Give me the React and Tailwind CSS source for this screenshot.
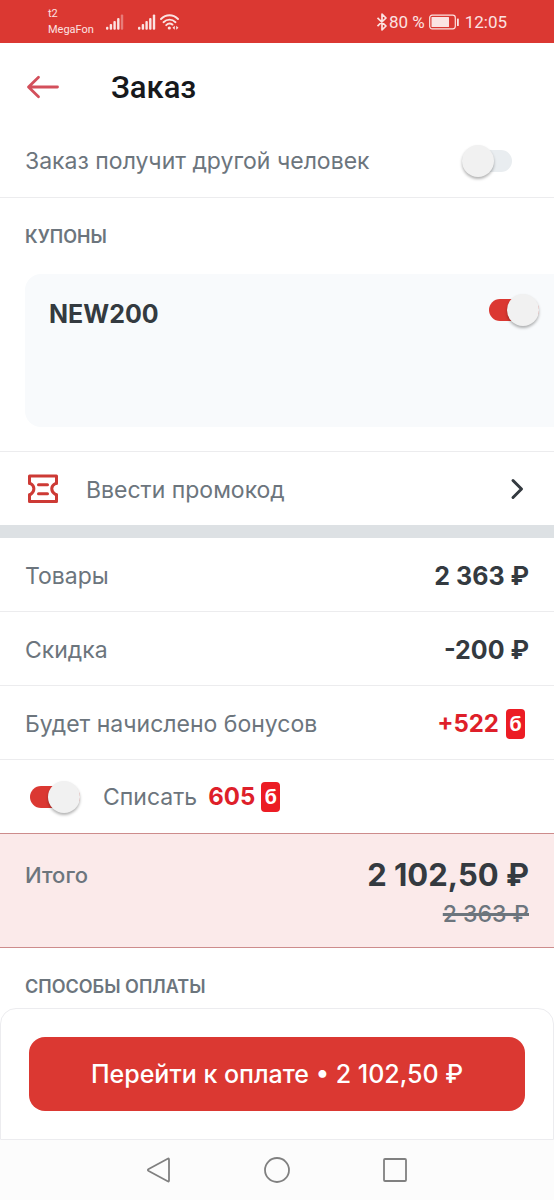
import { useState } from "react";

const rowStyle = "flex items-center justify-between h-[74px] px-[25px] pt-0.5 border-b border-[#ececee]";
const labelStyle = "text-[23px] leading-8 text-[#6c757d]";
const priceStyle = "text-[25px] leading-8 font-bold text-[#343a40]";
const headingStyle = "text-[18px] leading-7 font-semibold text-[#6c757d]";

/**
 * Material-like switch built on a native checkbox.
 * The track is drawn by ::before, the knob by ::after.
 */
const Switch = ({ id, checked, onChange }) => (
    <input
        id={id}
        type="checkbox"
        checked={checked}
        onChange={(e) => onChange(e.target.checked)}
        className="relative shrink-0 appearance-none w-[50px] h-8 cursor-pointer before:absolute before:inset-x-0 before:top-[5px] before:h-[22px] before:rounded-full before:bg-[#e9edf0] checked:before:bg-[#db3832] after:absolute after:left-0 after:top-0 after:size-8 after:rounded-full after:bg-[#f1f1f1] after:shadow-[0_2px_3px_rgba(0,0,0,0.3)] checked:after:left-[18px]"
    />
);

const BonusBadge = () => (
    <span className="inline-flex items-center justify-center w-[19px] h-[30px] rounded bg-[#ec1c24] text-white text-[20px] leading-7 font-bold">б</span>
);

/* Mobile signal, the last bar may be dimmed */
const Signal = ({ dim }) => (
    <svg className="w-[18px] h-4" viewBox="0 0 18 16" fill="#fbe3e2">
        <rect x="0" y="12.800" width="2.400" height="3" rx="1" />
        <rect x="3.700" y="10" width="2.400" height="5.800" rx="1" />
        <rect x="7.400" y="7" width="2.400" height="8.800" rx="1" />
        <rect x="11.100" y="4" width="2.400" height="11.800" rx="1" />
        <rect x="14.800" y="0.500" width="2.400" height="15.300" rx="1" opacity={dim ? 0.4 : 1} />
    </svg>
);

const StatusBar = () => (
    <div className="flex items-center justify-between h-[43px] pl-12 pr-[47px] bg-[#db3832] text-[#fbe3e2] font-['Roboto',sans-serif]">
        <div className="flex items-center">
            <div className="w-[58px] text-[11px] leading-4">
                <p>t2</p>
                <p>MegaFon</p>
            </div>
            <Signal dim />
            <span className="w-[14px]" />
            <Signal />
            <svg className="w-5 h-4 ml-1" viewBox="0 0 20 16" fill="none" stroke="#fbe3e2" strokeWidth="1.900" strokeLinecap="round">
                <path d="M1 5C6 0 13 0 18 5" />
                <path d="M3.500 8.200C7 4.800 12 4.800 15.500 8.200" />
                <path d="M6.200 11.200C8 9.400 10.500 9.200 12.500 10.600" />
                <circle cx="9.300" cy="14" r="1.600" fill="#fbe3e2" stroke="none" />
                <path d="M14.800 11.800L12.500 13.800L14.800 15.800ZM16.200 11.800L18.500 13.800L16.200 15.800Z" fill="#fbe3e2" stroke="none" />
            </svg>
        </div>
        <div className="flex items-center text-[17px] leading-6">
            <svg className="w-3 h-[18px]" viewBox="0 0 12 18" fill="none" stroke="#fbe3e2" strokeWidth="1.700" strokeLinejoin="round">
                <path d="M1.500 4.800L10 13L6 16.800V1.200L10 5L1.500 13.200" />
            </svg>
            <span className="ml-px">80 %</span>
            <svg className="w-[30px] h-4 ml-1 mr-1.5" viewBox="0 0 30 16">
                <rect x="0.700" y="1.200" width="25.600" height="13.600" rx="2.500" fill="none" stroke="#fbe3e2" strokeWidth="1.200" />
                <rect x="2.500" y="3" width="17.500" height="10" rx="0.500" fill="#fbe3e2" />
                <rect x="28" y="4.500" width="1.800" height="7.500" rx="0.600" fill="#fbe3e2" />
            </svg>
            <span>12:05</span>
        </div>
    </div>
);

const App = () => {
    const [otherPerson, setOtherPerson] = useState(false);
    const [coupon, setCoupon] = useState(true);
    const [spendBonus, setSpendBonus] = useState(true);

    return (
        <div className="flex flex-col min-h-screen bg-white font-['Inter',sans-serif]">
            <StatusBar />

            <header className="flex items-center h-[81px] px-[25px] pt-[7px]">
                <button type="button" aria-label="Назад" className="cursor-pointer">
                    <svg className="w-9 h-6" viewBox="0 0 36 24" fill="none" stroke="#d34f5b" strokeWidth="2.800" strokeLinecap="round" strokeLinejoin="round">
                        <path d="M32.500 12H4M13.500 2.200L3.500 12L13.500 21.800" />
                    </svg>
                </button>
                <h1 className="ml-[50px] pt-0.5 text-[31px] leading-9 font-medium text-[#17191c] font-['Roboto',sans-serif]">Заказ</h1>
            </header>

            <main className="flex-1">
                <div className="flex items-center justify-between h-[74px] pl-[25px] pr-[42px] border-b border-[#ececee]">
                    <label htmlFor="other-person" className={labelStyle}>Заказ получит другой человек</label>
                    <Switch id="other-person" checked={otherPerson} onChange={setOtherPerson} />
                </div>

                {/* Coupons: the card runs off the right edge */}
                <section className="pl-[25px] pt-[25px] pb-6 border-b border-[#ececee]">
                    <h2 className={headingStyle}>КУПОНЫ</h2>
                    <div className="flex items-start justify-between h-[153px] mt-[23px] pl-6 pr-[15px] pt-5 rounded-l-2xl bg-[#f8fafc]">
                        <label htmlFor="coupon" className="text-[25px] leading-10 font-bold text-[#343a40]">NEW200</label>
                        <Switch id="coupon" checked={coupon} onChange={setCoupon} />
                    </div>
                </section>

                <button type="button" className="flex items-center w-full h-[73px] pl-[25px] pr-7 cursor-pointer">
                    <svg className="w-9 h-8" viewBox="0 0 36 32" fill="none" stroke="#cd3a35" strokeWidth="3" strokeLinecap="round" strokeLinejoin="round">
                        <path d="M5 3H31.500V10.500H30.500C25.500 13 25.500 18.500 30.500 21.500H31.500V28.500H4.500V21.500H5.500C10 18.500 10 13 5.500 10.500H4.500V3Z" />
                        <path d="M13.500 11.800H22.500M13.500 20.800H22.500" />
                    </svg>
                    <span className="ml-[25px] pt-0.5 text-[23px] leading-8 text-[#6c757d]">Ввести промокод</span>
                    <svg className="w-4 h-6 ml-auto" viewBox="0 0 16 24" fill="none" stroke="#343a40" strokeWidth="3" strokeLinecap="round" strokeLinejoin="round">
                        <path d="M3 3.500L11.500 12L3 20.500" />
                    </svg>
                </button>

                <div className="h-[13px] bg-[#dde1e4]" />

                <dl>
                    <div className={rowStyle}>
                        <dt className={labelStyle}>Товары</dt>
                        <dd className={priceStyle}>2 363 ₽</dd>
                    </div>
                    <div className={rowStyle}>
                        <dt className={labelStyle}>Скидка</dt>
                        <dd className={priceStyle}>-200 ₽</dd>
                    </div>
                    <div className={rowStyle}>
                        <dt className={labelStyle}>Будет начислено бонусов</dt>
                        <dd className="flex items-center gap-[7px] pr-1 text-[24px] leading-8 font-bold text-[#de1f2a]">
                            +522
                            <BonusBadge />
                        </dd>
                    </div>
                </dl>

                <div className="flex items-center h-[73px] px-[30px]">
                    <Switch id="spend-bonus" checked={spendBonus} onChange={setSpendBonus} />
                    <label htmlFor="spend-bonus" className="flex items-center ml-[23px] text-[23px] leading-8 text-[#6c757d]">
                        Списать
                        <span className="ml-[11px] mr-1.5 text-[24px] font-bold text-[#de1f2a]">605</span>
                        <BonusBadge />
                    </label>
                </div>

                {/* Order total */}
                <div className="flex items-start justify-between h-[115px] px-[25px] pt-[25px] border-y border-[#cd8c8c] bg-[#fbeaea]">
                    <p className="text-[22px] leading-8 font-medium text-[#6c757d]">Итого</p>
                    <div className="text-right">
                        <p className="text-[31px] leading-8 font-bold text-[#343a40]">2 102,50 ₽</p>
                        <p className="mt-[7px] text-[23px] leading-8 font-medium text-[#6c757d] line-through decoration-3">2 363 ₽</p>
                    </div>
                </div>

                <div className="px-[25px] pt-[25px] pb-[7px]">
                    <h2 className={headingStyle}>СПОСОБЫ ОПЛАТЫ</h2>
                </div>
            </main>

            <footer>
                <div className="px-7 py-7 border border-[#ececef] rounded-t-2xl">
                    <button type="button" className="w-full h-[74px] rounded-2xl bg-[#db3832] text-white text-[25px] leading-8 font-medium cursor-pointer">
                        Перейти к оплате • 2 102,50 ₽
                    </button>
                </div>
                <nav className="flex items-center justify-center h-[61px] pb-0.5 bg-[#fcfcfc]">
                    <button type="button" aria-label="Назад" className="flex justify-center w-[118px]">
                        <svg className="size-7" viewBox="0 0 28 28" fill="none" stroke="#808080" strokeWidth="1.800" strokeLinejoin="round">
                            <path d="M24 3.400V24.600Q24 26 22.700 25.300L3.700 15Q2 14 3.700 13L22.700 2.700Q24 2 24 3.400Z" />
                        </svg>
                    </button>
                    <button type="button" aria-label="Домой" className="flex justify-center w-[118px]">
                        <svg className="size-7" viewBox="0 0 28 28" fill="none" stroke="#808080" strokeWidth="1.800">
                            <circle cx="14" cy="14" r="12" />
                        </svg>
                    </button>
                    <button type="button" aria-label="Недавние" className="flex justify-center w-[118px]">
                        <svg className="size-7" viewBox="0 0 28 28" fill="none" stroke="#808080" strokeWidth="1.800">
                            <rect x="3" y="3" width="22" height="22" rx="1" />
                        </svg>
                    </button>
                </nav>
            </footer>
        </div>
    );
};

export default App;
